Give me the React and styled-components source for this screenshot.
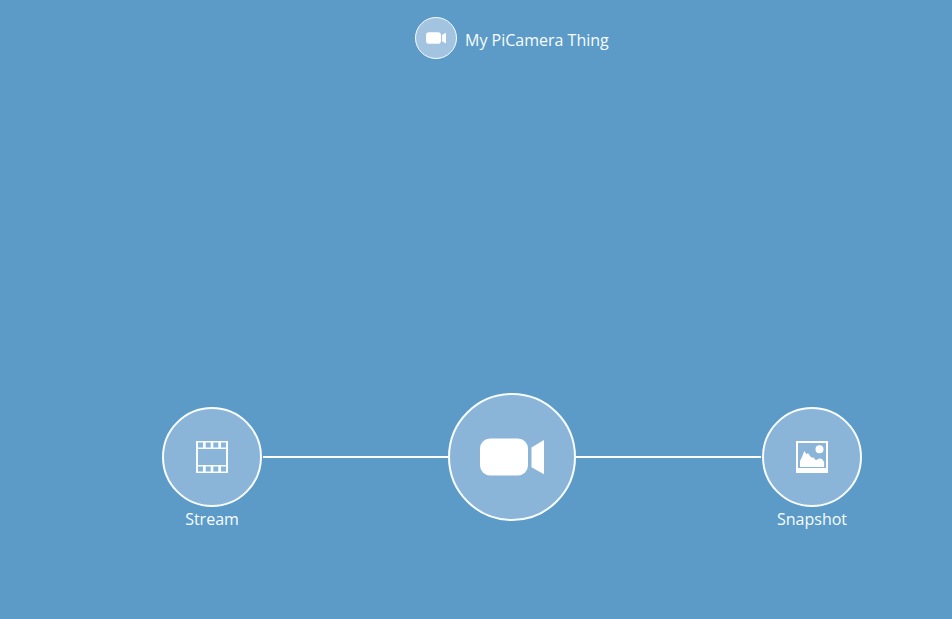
import React from "react";
import styled, { createGlobalStyle } from "styled-components";

const GlobalStyle = createGlobalStyle`
  html, body { margin: 0; background: #5c9bc7; overflow: hidden; }
  * { box-sizing: border-box; }
`;

const Page = styled.main`
  height: 619px;
  background: #5c9bc7;
  color: #f8fdff;
  font: 400 16px/24px "Open Sans", sans-serif;
`;

const Header = styled.header`
  display: flex;
  gap: 8px;
  height: 393px;
  padding: 17px 0 0 415px;
`;

const Title = styled.h1`
  margin: 11px 0 0;
  font: inherit;
  white-space: nowrap;
`;

const Circle = styled.div`
  display: flex;
  flex: none;
  align-items: center;
  justify-content: center;
  width: ${(p) => p.$size}px;
  height: ${(p) => p.$size}px;
  border: ${(p) => p.$border || 2}px solid #f8fdff;
  border-radius: 50%;
  background: ${(p) => p.$fill || "#8ab5d8"};
`;

const Graph = styled.section`
  display: flex;
  align-items: flex-start;
  width: 700px;
  margin-left: 162px;
`;

const Node = styled.div`
  display: flex;
  flex: none;
  flex-direction: column;
  align-items: center;
  width: 100px;
  margin-top: 14px;
`;

const Label = styled.span`
  white-space: nowrap;
`;

const Link = styled.div`
  flex: 1;
  height: 2px;
  margin: 63px ${(p) => (p.$side === "right" ? 1 : 0)}px 0 ${(p) => (p.$side === "left" ? 1 : 0)}px;
  background: #fff;
`;

const Icon = styled.svg`
  display: block;
  flex: none;
`;

const CameraIcon = ({ size }) => (
  <Icon width={size} height={size} viewBox="0 0 64 64" fill="#fff">
    <rect x="0" y="13.5" width="48" height="37" rx="10" />
    <path d="M51.5 22.5 64 15v34.3l-12.5-7z" />
  </Icon>
);

const FilmIcon = () => (
  <Icon width="32" height="32" viewBox="0 0 32 32" fill="#f8fdff">
    <path
      fillRule="evenodd"
      d="M0 0h32v32H0zM2 8v16h28V8zM2 1.6v4.8h5V1.6zm7.7 0v4.8h5V1.6zm7.6 0v4.8h5V1.6zM25 1.6v4.8h5V1.6zM2 25.6v4.8h5v-4.8zm7.7 0v4.8h5v-4.8zm7.6 0v4.8h5v-4.8zm7.7 0v4.8h5v-4.8z"
    />
  </Icon>
);

const PictureIcon = () => (
  <Icon width="32" height="32" viewBox="0 0 32 32" fill="#fff">
    <path fillRule="evenodd" d="M0 0h32v32H0zM2 2v25h28V2z" />
    <circle cx="23.5" cy="8.2" r="4" />
    <path d="M4 26v-6l2-4 1.5-4L8.4 10l1.8 3 2-.8 3 4.2 2.3.2 2.4 2.6 3.2-1.7 3 .5 2 3V26z" />
  </Icon>
);

export default function App() {
  return (
    <>
      <GlobalStyle />
      <Page>
        <Header>
          <Circle $size={42} $border={1} $fill="#a3c4e0">
            <CameraIcon size={20} />
          </Circle>
          <Title>My PiCamera Thing</Title>
        </Header>
        <Graph>
          <Node>
            <Circle $size={100}>
              <FilmIcon />
            </Circle>
            <Label>Stream</Label>
          </Node>
          <Link $side="left" />
          <Circle $size={128}>
            <CameraIcon size={64} />
          </Circle>
          <Link $side="right" />
          <Node>
            <Circle $size={100}>
              <PictureIcon />
            </Circle>
            <Label>Snapshot</Label>
          </Node>
        </Graph>
      </Page>
    </>
  );
}
